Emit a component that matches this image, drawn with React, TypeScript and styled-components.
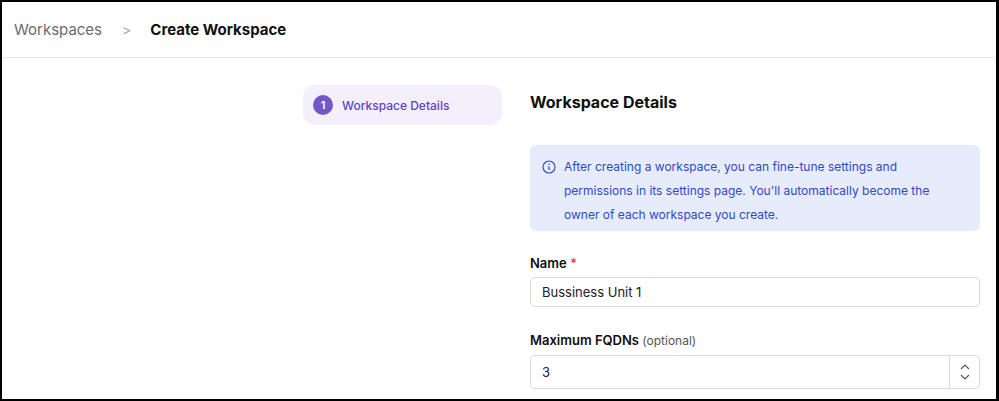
import React from "react";
import styled, { createGlobalStyle } from "styled-components";

const G = createGlobalStyle`
  html, body { margin:0; padding:0; background:#000; }
  body { font-family: Inter, "Noto Sans", sans-serif; }
`;
const Frame = styled.div`
  box-sizing:border-box; width:999px; height:401px; border:2px solid #000; border-right-width:3px;
  background:#fff; overflow:hidden; display:flex; flex-direction:column;
`;
const Header = styled.div`
  height:54px; border-bottom:1px solid #e6e6e6; display:flex; align-items:center; padding:0 12px; gap:0;
  box-sizing:content-box; padding-bottom:1px;
`;
const Crumb = styled.span`font-size:15px; color:#6b6b6b;`;
const Sep = styled.span`font-size:14px; color:#aaa; margin:0 19px 0 20px;`;
const Current = styled.span`font-size:15px; font-weight:700; color:#111;`;
const Body = styled.div`display:flex; padding-top:27px; padding-left:301px; gap:28px;`;
const Step = styled.div`
  width:199px; height:40px; border-radius:12px; background:#f3f0fc; display:flex; align-items:center;
  padding-left:10px; box-sizing:border-box; gap:9px; color:#6243c1; font-size:12px; font-weight:500;
`;
const Num = styled.span`
  width:20px; height:20px; border-radius:50%; background:#7357c9; color:#fff; font-size:11px; font-weight:600;
  display:flex; align-items:center; justify-content:center;
`;
const Main = styled.div`width:450px; display:flex; flex-direction:column;`;
const Title = styled.h2`margin:8px 0 0; font-size:16px; font-weight:700; color:#111; line-height:18px;`;
const Info = styled.div`
  margin-top:34px; background:#e6ecfb; border-radius:6px; padding:10px 14px 10px 12px; display:flex; gap:8px;
  color:#2f49c9; font-size:12px; line-height:24px; height:86px; box-sizing:border-box;
`;
const Label = styled.div`margin-top:${(p: { mt: number }) => p.mt}px; font-size:13px; font-weight:600; color:#111; line-height:16px;`;
const Req = styled.span`color:#e5484d;`;
const Opt = styled.span`font-weight:400; font-size:12px; color:#555;`;
const Input = styled.div`
  margin-top:6px; height:${(p: { h: number }) => p.h}px; border:1px solid #d9d9d9; border-radius:5px; box-sizing:border-box;
  display:flex; align-items:center; font-size:13px; color:#222; overflow:hidden;
`;
const Value = styled.span`flex:1; padding-left:11px;`;
const Spin = styled.div`
  width:29px; align-self:stretch; border-left:1px solid #d9d9d9; display:flex; flex-direction:column;
  align-items:center; justify-content:center; gap:4px;
`;

const Chev = ({ up }: { up?: boolean }) => (
  <svg width="10" height="6" viewBox="0 0 10 6"><path d={up ? "M1 5 L5 1 L9 5" : "M1 1 L5 5 L9 1"} fill="none" stroke="#555" strokeWidth="1.2"/></svg>
);

export default function App() {
  return (
    <Frame>
      <G />
      <Header>
        <Crumb>Workspaces</Crumb>
        <Sep>&gt;</Sep>
        <Current>Create Workspace</Current>
      </Header>
      <Body>
        <div><Step><Num>1</Num>Workspace Details</Step></div>
        <Main>
          <Title>Workspace Details</Title>
          <Info>
            <svg width="14" height="14" viewBox="0 0 14 14" style={{ marginTop: 5, flexShrink: 0 }}>
              <circle cx="7" cy="7" r="6" fill="none" stroke="#2f49c9" strokeWidth="1.1"/>
              <path d="M7 6.2 V10" stroke="#2f49c9" strokeWidth="1.2"/>
              <circle cx="7" cy="4.3" r="0.8" fill="#2f49c9"/>
            </svg>
            <span>After creating a workspace, you can fine-tune settings and permissions in its settings page. You'll automatically become the owner of each workspace you create.</span>
          </Info>
          <Label mt={24}>Name <Req>*</Req></Label>
          <Input h={30}><Value>Bussiness Unit 1</Value></Input>
          <Label mt={25}>Maximum FQDNs <Opt>(optional)</Opt></Label>
          <Input h={34}><Value>3</Value><Spin><Chev up /><Chev /></Spin></Input>
        </Main>
      </Body>
    </Frame>
  );
}
